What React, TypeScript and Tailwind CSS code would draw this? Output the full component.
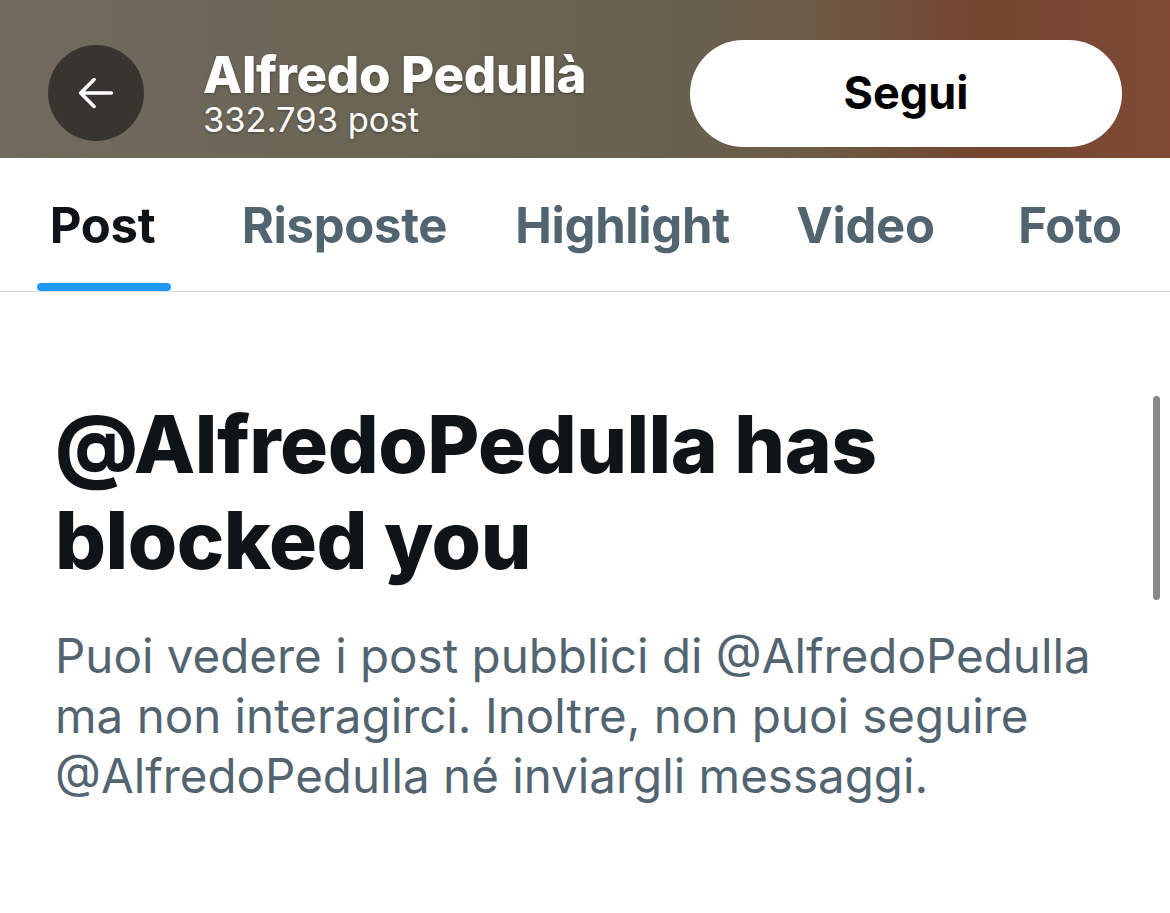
import React from "react";

export default function App() {
  const font = { fontFamily: "Inter, 'Noto Sans', 'Liberation Sans', sans-serif" };
  return (
    <div className="relative w-[1170px] h-[913px] bg-white overflow-hidden" style={font}>
      {/* Header */}
      <div className="h-[158px] pt-[28px] flex items-center bg-[linear-gradient(90deg,#716b5f_0%,#6a6454_40%,#686150_58%,#6d5a44_70%,#754530_84%,#7e4a36_100%)]">
        <div className="ml-[48px] w-[96px] h-[96px] rounded-full bg-[#38342f] flex items-center justify-center">
          <svg width="46" height="46" viewBox="0 0 24 24" fill="none" stroke="white" strokeWidth="1.9" strokeLinecap="round" strokeLinejoin="round">
            <path d="M20 12H4.5" />
            <path d="M11 5l-7 7 7 7" />
          </svg>
        </div>
        <div className="ml-[59px] flex flex-col text-white [text-shadow:0_1px_3px_rgba(0,0,0,0.35)]">
          <div className="text-[51px] font-extrabold leading-[54px] tracking-[-0.3px]">Alfredo Pedullà</div>
          <div className="text-[34.5px] leading-[36px] font-normal">332.793 post</div>
        </div>
        <div className="ml-auto mr-[48px] w-[432px] h-[107px] rounded-full bg-white flex items-center justify-center">
          <span className="text-[45px] font-bold text-black">Segui</span>
        </div>
      </div>

      {/* Tabs */}
      <div className="h-[134px] flex border-b border-[#cfd9de]">
        {[
          { t: "Post", w: "w-[205px]", active: true },
          { t: "Risposte", w: "w-[279px]" },
          { t: "Highlight", w: "w-[277px]" },
          { t: "Video", w: "w-[209px]" },
          { t: "Foto", w: "flex-1" },
        ].map((tab) => (
          <div key={tab.t} className={`${tab.w} relative flex items-center justify-center pt-[2px]`}>
            <span className={`text-[49px] font-bold tracking-[-0.3px] ${tab.active ? "text-[#0f1419]" : "text-[#536471]"}`}>{tab.t}</span>
            {tab.active && (
              <div className="absolute bottom-0 left-[37px] w-[134px] h-[8px] rounded-full bg-[#1d9bf0]" />
            )}
          </div>
        ))}
      </div>

      {/* Content */}
      <div className="pl-[55px] pr-[40px] pt-[104px]">
        <h1 className="text-[80px] font-extrabold leading-[96px] text-[#0f1419] tracking-[-0.5px]">
          @AlfredoPedulla has
          <br />
          blocked you
        </h1>
        <p className="mt-[38px] text-[47.5px] leading-[60px] text-[#536471] whitespace-nowrap">
          Puoi vedere i post pubblici di @AlfredoPedulla
          <br />
          ma non interagirci. Inoltre, non puoi seguire
          <br />
          @AlfredoPedulla né inviargli messaggi.
        </p>
      </div>

      {/* Scrollbar */}
      <div className="absolute right-[10px] top-[396px] w-[7px] h-[204px] rounded-full bg-[#888888]" />
    </div>
  );
}
